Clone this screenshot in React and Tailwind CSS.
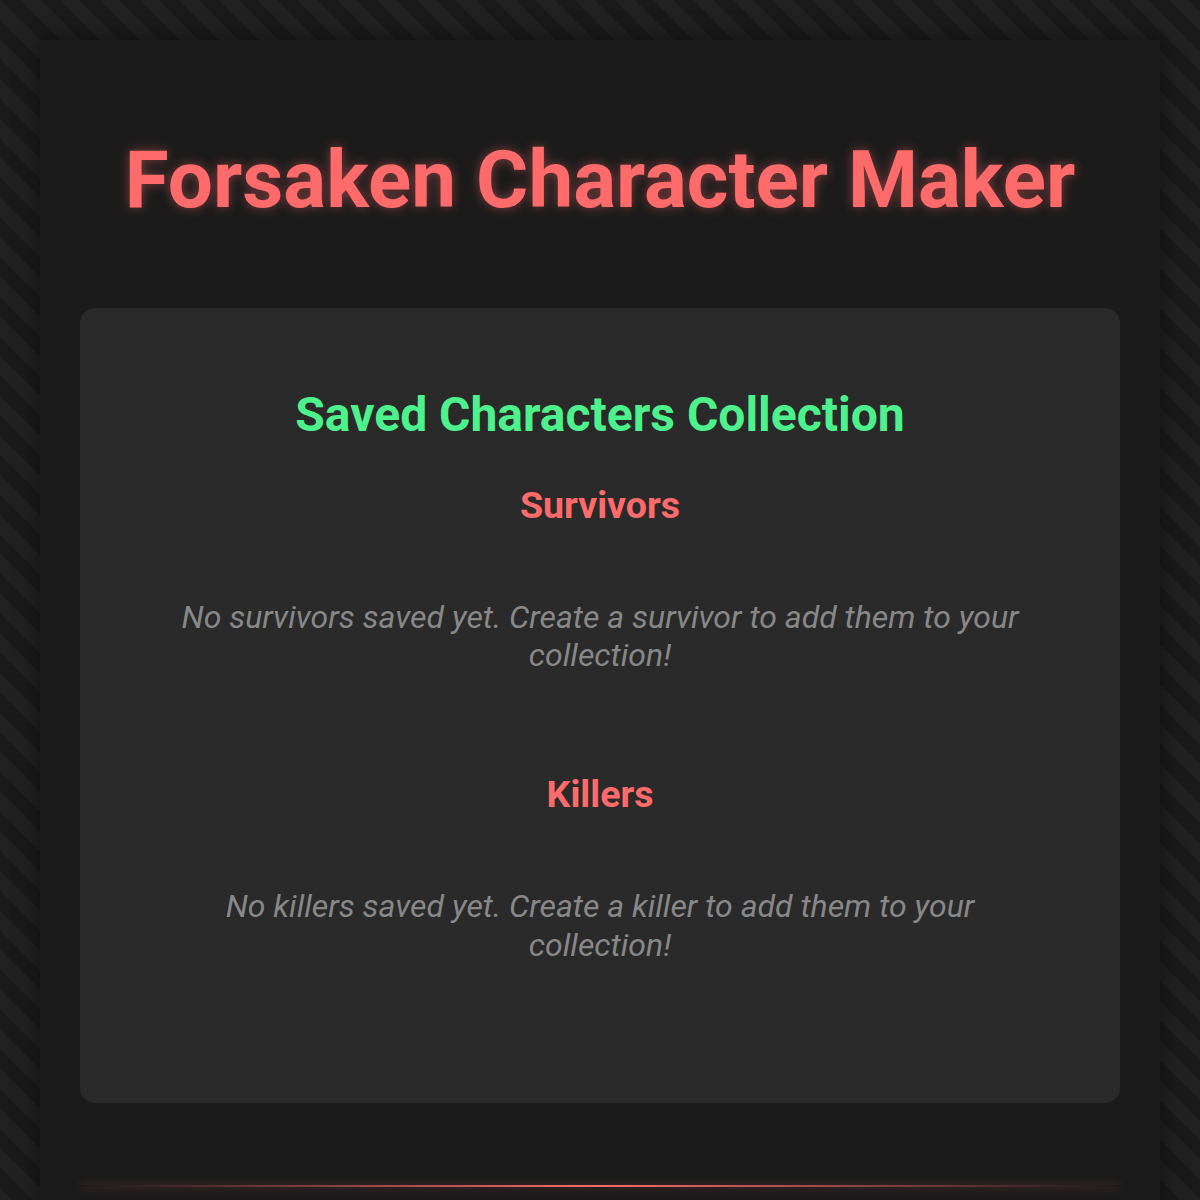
export default function App() {
  return (
    <div
      className="min-h-screen p-[40px] pb-0 bg-[repeating-linear-gradient(45deg,#1a1a1a_0px,#1a1a1a_14px,#212121_14px,#212121_28px)]"
      style={{ fontFamily: "Roboto, 'Noto Sans', sans-serif" }}
    >
      <div className="bg-[#1b1b1b] px-[40px] pt-[92px] pb-[40px] min-h-[1160px] shadow-[0_0_20px_rgba(0,0,0,0.5)]">
        <h1 className="text-center text-[80px] leading-[1.2] font-bold text-[#ff6b6b] [text-shadow:0_0_12px_rgba(255,107,107,0.45)]">
          Forsaken Character Maker
        </h1>

        <section className="mt-[80px] rounded-[15px] bg-[#2a2a2a] px-[80px] pt-[78px] pb-[139px] text-center">
          <h2 className="text-[48px] leading-[1.2] font-bold text-[#4ef28c]">
            Saved Characters Collection
          </h2>

          <h3 className="mt-[39px] text-[37.5px] leading-[1.2] font-bold text-[#ff6b6b]">
            Survivors
          </h3>
          <p className="mt-[70px] text-[32px] leading-[1.2] italic text-[#888888]">
            No survivors saved yet. Create a survivor to add them to your collection!
          </p>

          <h3 className="mt-[98px] text-[37.5px] leading-[1.2] font-bold text-[#ff6b6b]">
            Killers
          </h3>
          <p className="mt-[70px] text-[32px] leading-[1.2] italic text-[#888888]">
            No killers saved yet. Create a killer to add them to your collection!
          </p>
        </section>

        <div className="mt-[82px] h-[2px] bg-[linear-gradient(90deg,transparent,#ff6b6b,transparent)] shadow-[0_0_8px_rgba(255,107,107,0.4)]" />
      </div>
    </div>
  );
}
